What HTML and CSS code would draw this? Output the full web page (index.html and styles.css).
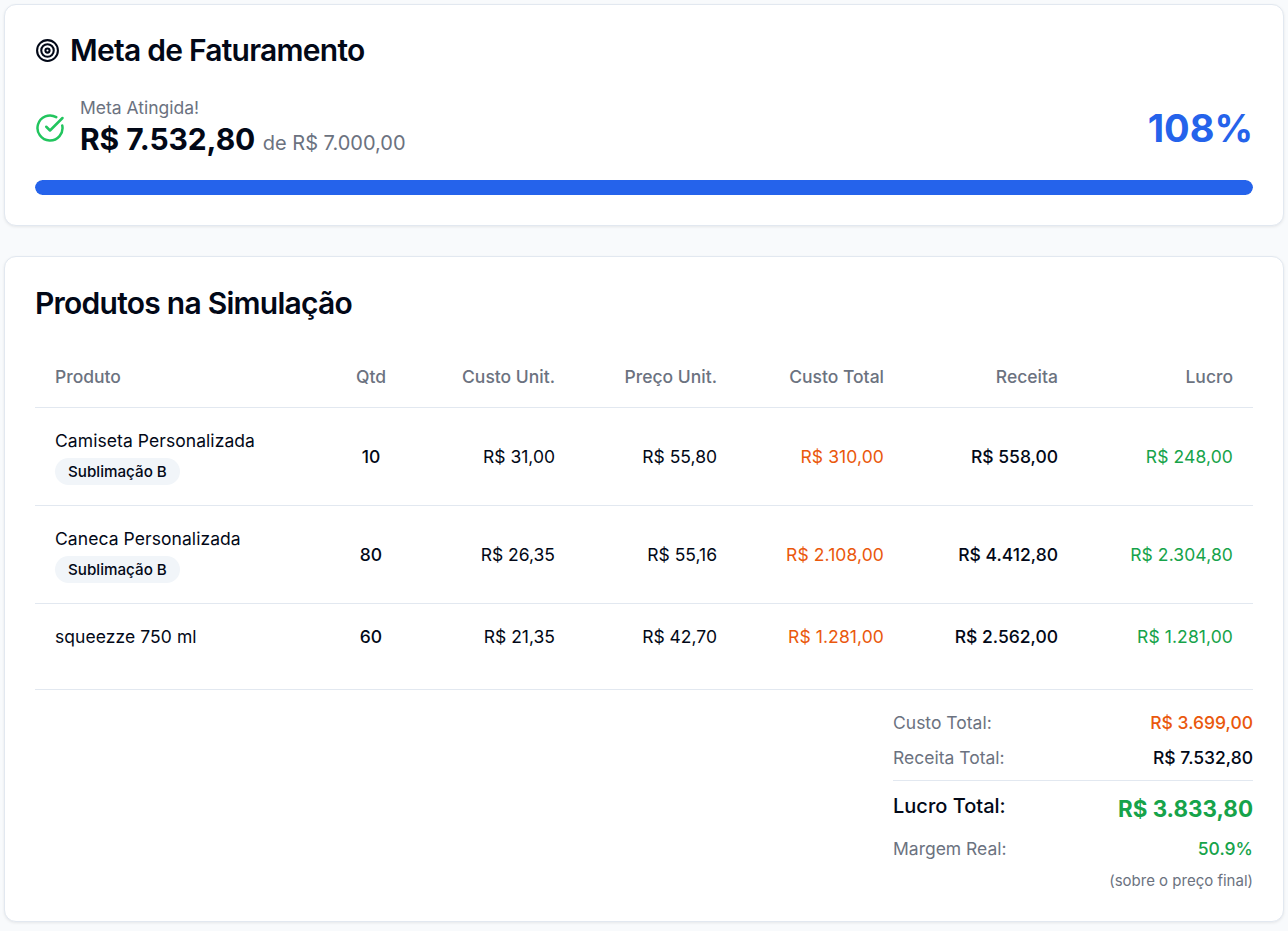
FILE: index.html
```html
<!DOCTYPE html>
<html lang="pt-BR">
<head>
<meta charset="utf-8">
<title>Simulação</title>
<link rel="stylesheet" href="styles.css">
</head>
<body>
<main class="page">
  <section class="card goal">
    <h2 class="goal-title">
      <svg class="icon-target" viewBox="0 0 24 24" fill="none" stroke="currentColor" stroke-width="2" stroke-linecap="round" stroke-linejoin="round"><circle cx="12" cy="12" r="10"/><circle cx="12" cy="12" r="6"/><circle cx="12" cy="12" r="2"/></svg>
      Meta de Faturamento
    </h2>
    <div class="goal-row">
      <div class="goal-left">
        <svg class="icon-check" viewBox="0 0 24 24" fill="none" stroke="currentColor" stroke-width="2" stroke-linecap="round" stroke-linejoin="round"><path d="M21.8 10A10 10 0 1 1 17 3.34"/><path d="m9 11 3 3L22 4"/></svg>
        <div>
          <div class="goal-label">Meta Atingida!</div>
          <div class="goal-values"><span class="goal-value">R$ 7.532,80</span> <span class="goal-of">de R$ 7.000,00</span></div>
        </div>
      </div>
      <div class="goal-pct">108%</div>
    </div>
    <div class="bar"><div class="bar-fill"></div></div>
  </section>

  <section class="card products">
    <h2 class="products-title">Produtos na Simulação</h2>
    <table class="table">
      <colgroup>
        <col class="c-prod"><col class="c-qtd"><col class="c-cu"><col class="c-pu"><col class="c-ct"><col class="c-rec"><col class="c-luc">
      </colgroup>
      <thead>
        <tr><th class="left">Produto</th><th class="center">Qtd</th><th>Custo Unit.</th><th>Preço Unit.</th><th>Custo Total</th><th>Receita</th><th>Lucro</th></tr>
      </thead>
      <tbody>
        <tr class="tall">
          <td class="left"><div class="pname">Camiseta Personalizada</div><span class="tag">Sublimação B</span></td>
          <td class="center qty">10</td><td>R$ 31,00</td><td>R$ 55,80</td><td class="orange">R$ 310,00</td><td class="rev">R$ 558,00</td><td class="green">R$ 248,00</td>
        </tr>
        <tr class="tall">
          <td class="left"><div class="pname">Caneca Personalizada</div><span class="tag">Sublimação B</span></td>
          <td class="center qty">80</td><td>R$ 26,35</td><td>R$ 55,16</td><td class="orange">R$ 2.108,00</td><td class="rev">R$ 4.412,80</td><td class="green">R$ 2.304,80</td>
        </tr>
        <tr class="short">
          <td class="left"><div class="pname">squeezze 750 ml</div></td>
          <td class="center qty">60</td><td>R$ 21,35</td><td>R$ 42,70</td><td class="orange">R$ 1.281,00</td><td class="rev">R$ 2.562,00</td><td class="green">R$ 1.281,00</td>
        </tr>
      </tbody>
    </table>
    <div class="summary-wrap">
      <div class="summary">
        <div class="s-row s-cost"><span class="s-label">Custo Total:</span><span class="s-orange">R$ 3.699,00</span></div>
        <div class="s-row s-rev"><span class="s-label">Receita Total:</span><span class="s-dark">R$ 7.532,80</span></div>
        <div class="s-row s-profit"><span class="s-profit-label">Lucro Total:</span><span class="s-profit-value">R$ 3.833,80</span></div>
        <div class="s-row s-margin"><span class="s-label">Margem Real:</span><span class="s-margin-value">50.9%</span></div>
        <div class="s-note">(sobre o preço final)</div>
      </div>
    </div>
  </section>
</main>
</body>
</html>
```
FILE: styles.css
```css
* { box-sizing: border-box; }
html, body { margin: 0; padding: 0; }
body {
  background: #f8fafc;
  color: #020817;
  font-family: Inter, "Liberation Sans", sans-serif;
  height: 931px;
  overflow: hidden;
}
.page {
  padding: 4px;
  display: flex;
  flex-direction: column;
  gap: 30px;
}
.card {
  background: #fff;
  border: 1px solid #e2e8f0;
  border-radius: 12px;
  box-shadow: 0 1px 3px rgba(0,0,0,.08);
  padding: 30px;
}
.goal { height: 222px; padding-top: 25px; }
.goal-title {
  margin: 0;
  display: flex;
  align-items: center;
  gap: 10px;
  font-size: 30px;
  line-height: 40px;
  font-weight: 600;
  letter-spacing: -0.75px;
}
.icon-target { width: 25px; height: 25px; flex: none; }
.goal-row {
  margin-top: 26px;
  display: flex;
  justify-content: space-between;
  align-items: center;
}
.goal-left { display: flex; align-items: center; gap: 15px; }
.icon-check { width: 30px; height: 30px; color: #22c55e; flex: none; margin-top: -4px; }
.goal-label { font-size: 17.5px; line-height: 24px; color: #6b7280; }
.goal-values { line-height: 38px; }
.goal-value { font-size: 30px; font-weight: 700; letter-spacing: -0.1px; }
.goal-of { font-size: 20px; color: #6b7280; margin-left: 3px; }
.goal-pct { font-size: 38px; font-weight: 700; color: #2563eb; margin-top: -4px; }
.bar { margin-top: 17px; height: 15px; border-radius: 8px; background: #e2e8f0; overflow: hidden; }
.bar-fill { height: 100%; width: 100%; background: #2563eb; border-radius: 8px; }

.products { height: 666px; padding-top: 26px; }
.products-title {
  margin: 0;
  font-size: 30px;
  line-height: 40px;
  font-weight: 600;
  letter-spacing: -0.75px;
}
.table {
  margin-top: 24px;
  width: 1218px;
  table-layout: fixed;
  border-collapse: collapse;
  font-size: 17.5px;
}
.c-prod { width: 302px; }
.c-qtd { width: 68px; }
.c-cu { width: 170px; }
.c-pu { width: 162px; }
.c-ct { width: 167px; }
.c-rec { width: 174px; }
.c-luc { width: 175px; }
.table th {
  height: 60px;
  padding: 0 20px;
  text-align: right;
  font-weight: 500;
  color: #6b7280;
  border-bottom: 1px solid #e2e8f0;
}
.table td {
  padding: 0 20px;
  text-align: right;
  font-weight: 400;
}
.tall td { border-bottom: 1px solid #e2e8f0; }
.table .left { text-align: left; }
.table .center { text-align: center; padding: 0; }
.tall { height: 98px; }
.short { height: 67px; }
.tall .left { padding-top: 2px; }
.pname { line-height: 24px; font-weight: 400; letter-spacing: 0.07px; }
.short .pname { padding-top: 1px; }
.tag {
  display: block;
  width: fit-content;
  margin-top: 5px;
  background: #f1f5f9;
  border-radius: 14px;
  font-size: 15.2px;
  font-weight: 500;
  line-height: 27px;
  padding: 0 13px;
}
.table .qty { font-weight: 500; }
.table .rev { font-weight: 500; }
.table .orange { color: #ea580c; letter-spacing: 0.1px; }
.table .green { color: #16a34a; letter-spacing: 0.1px; }
.summary-wrap {
  display: flex;
  justify-content: flex-end;
  margin-top: 19px;
  padding-top: 15px;
  border-top: 1px solid #e2e8f0;
}
.summary { width: 360px; font-size: 17.5px; }
.s-row { display: flex; justify-content: space-between; align-items: center; }
.s-cost, .s-rev { height: 35px; }
.s-label { color: #6b7280; }
.s-orange { color: #ea580c; font-weight: 500; }
.s-dark { font-weight: 500; }
.s-profit { border-top: 1px solid #e2e8f0; margin-top: 5px; height: 50px; padding-top: 5px; }
.s-profit-label { font-size: 20px; font-weight: 500; margin-top: -4px; }
.s-profit-value { font-size: 22.4px; font-weight: 700; color: #16a34a; }
.s-margin { height: 36px; }
.s-margin-value { color: #16a34a; font-weight: 500; }
.s-note { text-align: right; font-size: 15px; color: #6b7280; line-height: 28px; margin-top: 1px; }
```
